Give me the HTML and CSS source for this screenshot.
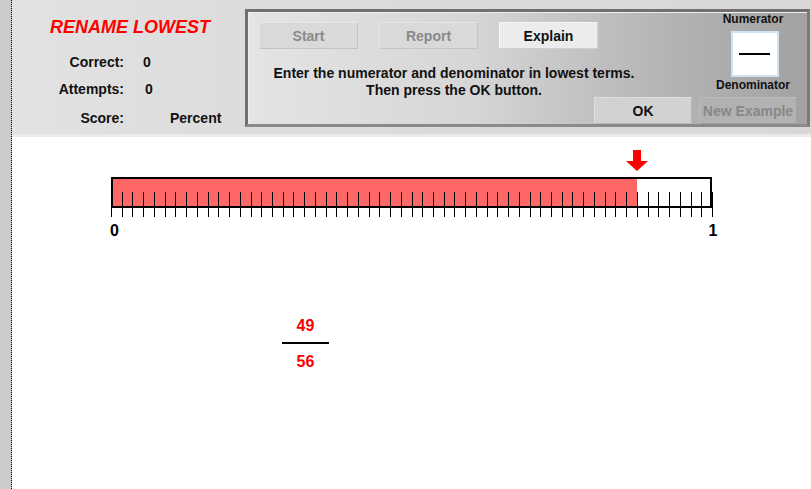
FILE: index.html
```html
<!DOCTYPE html>
<html lang="en">
<head>
    <meta charset="UTF-8">
    <title>Rename Lowest</title>
    <link rel="stylesheet" href="styles.css">
</head>
<body>
<div class="page">
    <div class="side-strip"></div>
    <div class="main">
        <div class="header">
            <div class="stats">
                <h1 class="title">RENAME LOWEST</h1>
                <div class="stat-grid">
                    <span class="stat-label">Correct:</span><span class="stat-value">0</span>
                    <span class="stat-label">Attempts:</span><span class="stat-value v2">0</span>
                    <span class="stat-label">Score:</span><span class="stat-value v3">Percent</span>
                </div>
            </div>
            <div class="panel">
                <div class="btn-row">
                    <button class="btn disabled">Start</button>
                    <button class="btn disabled">Report</button>
                    <button class="btn light">Explain</button>
                </div>
                <div class="instructions">
                    Enter the numerator and denominator in lowest terms.<br>
                    Then press the OK button.
                </div>
                <div class="answer">
                    <div class="answer-label">Numerator</div>
                    <div class="answer-box"><span class="answer-bar"></span></div>
                    <div class="answer-label">Denominator</div>
                </div>
                <button class="btn ok">OK</button>
                <button class="btn dark disabled">New Example</button>
            </div>
        </div>
        <div class="work">
            <svg class="numline" id="numline" width="640" height="100" viewBox="0 0 640 100">
                <rect x="12" y="33" width="525" height="29" fill="#ff6666"></rect>
                <g id="ticks" stroke="#000" stroke-width="1"></g>
                <rect x="12" y="33" width="599" height="29" fill="none" stroke="#000" stroke-width="2"></rect>
                <polygon points="533,5 541,5 541,16 548,16 537,26 526,16 533,16" fill="#ff0000"></polygon>
                <text x="14.5" y="91" class="nl-label">0</text>
                <text x="613" y="91" class="nl-label">1</text>
            </svg>
            <div class="fraction">
                <span class="frac-num">49</span>
                <span class="frac-bar"></span>
                <span class="frac-num">56</span>
            </div>
        </div>
    </div>
</div>
<script src="script.js"></script>
</body>
</html>
```

FILE: styles.css
```css
html, body {
    margin: 0;
    padding: 0;
    height: 100%;
    overflow: hidden;
    background-color: white;
    font-family: "Liberation Sans", Arial, sans-serif;
}
.page {
    display: flex;
    height: 489px;
}
.side-strip {
    width: 11px;
    background-color: #cccccc;
    border-right: 1px dotted #000;
    flex-shrink: 0;
}
.main {
    flex: 1;
    display: flex;
    flex-direction: column;
}
.header {
    display: flex;
    height: 134px;
    background: linear-gradient(to right, #e2e2e2, #dcdcdc 30%, #d8d8d8);
    border-bottom: 3px solid #ebebeb;
    border-top: 1px solid #e9e9e9;
    box-sizing: content-box;
    margin-top: -1px;
}
.stats {
    width: 233px;
    flex-shrink: 0;
}
.title {
    margin: 16px 0 0 38px;
    font-size: 18px;
    line-height: 22px;
    font-style: italic;
    font-weight: bold;
    color: #ff0000;
}
.stat-grid {
    display: grid;
    grid-template-columns: 112px auto;
    grid-template-rows: 27px 29px 16px;
    margin-top: 16px;
    font-size: 14px;
    font-weight: bold;
    line-height: 16px;
    color: #111;
}
.stat-label {
    text-align: right;
}
.stat-value {
    padding-left: 19px;
}
.stat-value.v2 {
    padding-left: 21px;
}
.stat-value.v3 {
    padding-left: 46px;
}
.panel {
    margin-top: 9px;
    width: 565px;
    height: 118px;
    box-sizing: border-box;
    border: 3px solid #707070;
    border-bottom-color: #8a8a8a;
    border-right-color: #7a7a7a;
    box-shadow: inset 1px 1px 0 #eeeeee;
    background: linear-gradient(to right, #e4e4e4, #d6d6d6 40%, #b4b4b4 75%, #a2a2a2);
    display: grid;
    grid-template-columns: 346px 105px 108px;
    grid-template-rows: 48px 37px 27px;
}
.btn-row {
    grid-column: 1 / 3;
    grid-row: 1;
    display: flex;
    gap: 21px;
    padding: 10px 0 0 11px;
}
.btn {
    width: 99px;
    height: 27px;
    box-sizing: border-box;
    padding: 0;
    font-family: "Liberation Sans", Arial, sans-serif;
    font-size: 14px;
    font-weight: bold;
    color: #111;
    background-color: #d9d9d9;
    border: 1px solid;
    border-color: #e6e6e6 #c4c4c4 #c4c4c4 #e6e6e6;
}
.btn.disabled {
    color: #8a8a8a;
}
.btn.light {
    background-color: #ececec;
    border-color: #f6f6f6 #cfcfcf #cfcfcf #f6f6f6;
}
.btn.ok {
    grid-column: 2;
    grid-row: 3;
    width: 98px;
    background-color: #d2d2d2;
    border-color: #dedede #b6b6b6 #b6b6b6 #dedede;
}
.btn.dark {
    grid-column: 3;
    grid-row: 3;
    width: 98px;
    background-color: #b2b2b2;
    border-color: #bcbcbc #a0a0a0 #a0a0a0 #bcbcbc;
    color: #878787;
}
.instructions {
    grid-column: 1 / 3;
    grid-row: 2;
    padding: 5px 39px 0 0;
    text-align: center;
    font-size: 14px;
    font-weight: bold;
    line-height: 17px;
    color: #111;
}
.answer {
    grid-column: 3;
    grid-row: 1 / 3;
    display: flex;
    flex-direction: column;
    align-items: center;
}
.answer-label {
    font-size: 12px;
    font-weight: bold;
    line-height: 13px;
    color: #111;
}
.answer-label:first-child {
    margin-top: 1px;
}
.answer-box {
    width: 48px;
    height: 46px;
    box-sizing: border-box;
    margin: 5px 0 2px 3px;
    background-color: white;
    border: 2px solid #cfe3f2;
    display: flex;
    align-items: center;
    justify-content: center;
}
.answer-bar {
    width: 31px;
    height: 2px;
    background-color: #000;
}
.work {
    flex: 1;
}
.numline {
    display: block;
    margin: 8px 0 0 88px;
}
.nl-label {
    font-size: 16px;
    font-weight: bold;
    text-anchor: middle;
    fill: #000;
}
.fraction {
    width: 47px;
    margin: 72px 0 0 270px;
    display: flex;
    flex-direction: column;
    align-items: center;
    font-size: 16px;
    font-weight: bold;
    color: #ff0000;
}
.frac-num {
    line-height: 18px;
}
.frac-bar {
    width: 47px;
    height: 2px;
    background-color: #000;
    margin: 7px 0 9px;
}
```

FILE: script.js
```js
// draw the 56 tick marks of the number line
var ticks = document.getElementById('ticks');
for (var i = 0; i <= 56; i++) {
    var x = Math.round(11 + i * 601 / 56) + 0.5;
    var line = document.createElementNS('http://www.w3.org/2000/svg', 'line');
    line.setAttribute('x1', x);
    line.setAttribute('x2', x);
    line.setAttribute('y1', 47);
    line.setAttribute('y2', 72);
    ticks.appendChild(line);
}
```
